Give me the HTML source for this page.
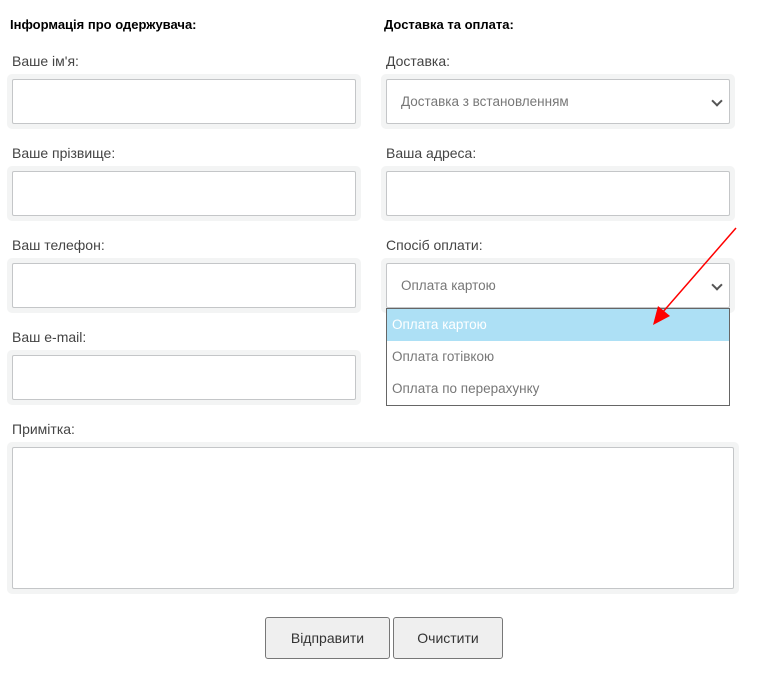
<!DOCTYPE html>
<html><head><meta charset="utf-8"><style>
body{margin:0;width:764px;height:686px;background:#fff;font-family:"Liberation Sans",sans-serif;position:relative;overflow:hidden}
.a{position:absolute}
h{position:absolute;font-weight:bold;font-size:13px;color:#000}
.l{position:absolute;font-size:14px;color:#444}
.w{position:absolute;background:#f3f4f4;border-radius:5px}
.i{position:absolute;background:#fff;border:1px solid #c4c6c8;border-radius:2px;box-sizing:border-box}
.s{font-size:13.5px;color:#777;line-height:43px;padding-left:14px}
.chev{position:absolute;right:8px;top:17px;width:6px;height:6px;border-right:2px solid #555;border-bottom:2px solid #555;transform:rotate(45deg)}
.b{position:absolute;background:#efefef;border:1px solid #777;border-radius:3px;box-sizing:border-box;font-size:14px;color:#333;text-align:center;line-height:40px}
.o{height:32px;line-height:32px;font-size:13.5px;color:#777;padding-left:5px}
</style></head><body>
<h style="left:10px;top:17px">Інформація про одержувача:</h>
<h style="left:384px;top:17px">Доставка та оплата:</h>

<div class="l" style="left:12px;top:53px">Ваше ім'я:</div>
<div class="w" style="left:7px;top:74px;width:354px;height:55px"></div><div class="i" style="left:12px;top:79px;width:344px;height:45px"></div>
<div class="l" style="left:12px;top:145px">Ваше прізвище:</div>
<div class="w" style="left:7px;top:166px;width:354px;height:55px"></div><div class="i" style="left:12px;top:171px;width:344px;height:45px"></div>
<div class="l" style="left:12px;top:237px">Ваш телефон:</div>
<div class="w" style="left:7px;top:258px;width:354px;height:55px"></div><div class="i" style="left:12px;top:263px;width:344px;height:45px"></div>
<div class="l" style="left:12px;top:329px">Ваш e-mail:</div>
<div class="w" style="left:7px;top:350px;width:354px;height:55px"></div><div class="i" style="left:12px;top:355px;width:344px;height:45px"></div>

<div class="l" style="left:386px;top:53px">Доставка:</div>
<div class="w" style="left:381px;top:74px;width:354px;height:55px"></div><div class="i s" style="left:386px;top:79px;width:344px;height:45px">Доставка з встановленням<div class="chev"></div></div>
<div class="l" style="left:386px;top:145px">Ваша адреса:</div>
<div class="w" style="left:381px;top:166px;width:354px;height:55px"></div><div class="i" style="left:386px;top:171px;width:344px;height:45px"></div>
<div class="l" style="left:386px;top:237px">Спосіб оплати:</div>
<div class="w" style="left:381px;top:258px;width:354px;height:55px"></div><div class="i s" style="left:386px;top:263px;width:344px;height:45px">Оплата картою<div class="chev"></div></div>
<div class="a" style="left:386px;top:308px;width:344px;height:98px;border:1px solid #666;box-sizing:border-box;background:#fff">
<div class="o" style="background:#ade0f5;color:#fff">Оплата картою</div>
<div class="o">Оплата готівкою</div>
<div class="o">Оплата по перерахунку</div>
</div>

<div class="l" style="left:12px;top:421px">Примітка:</div>
<div class="w" style="left:7px;top:442px;width:732px;height:152px"></div><div class="i" style="left:12px;top:447px;width:722px;height:142px"></div>

<div class="b" style="left:265px;top:617px;width:125px;height:42px">Відправити</div>
<div class="b" style="left:393px;top:617px;width:110px;height:42px">Очистити</div>

<svg class="a" style="left:0;top:0" width="764" height="686"><line x1="736" y1="228" x2="662" y2="313" stroke="#f00" stroke-width="1.5"/><polygon points="653,325 658,306 670,316" fill="#f00"/></svg>
</body></html>
